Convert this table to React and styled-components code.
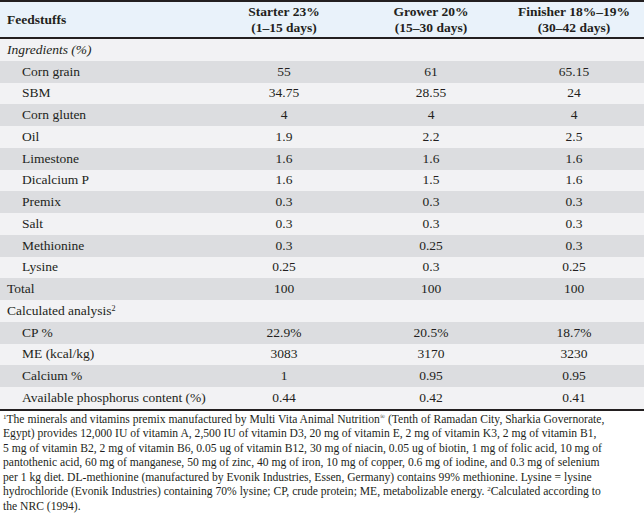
import React from 'react';
import styled, { createGlobalStyle } from 'styled-components';

const GlobalStyle = createGlobalStyle`
  html, body {
    margin: 0;
    padding: 0;
    background: #ffffff;
  }
  body {
    font-family: "Liberation Serif", "Times New Roman", serif;
    color: #231f20;
  }
`;

const cols = '210px 148px 146px 140px';

const Page = styled.div`
  width: 644px;
`;

const Table = styled.div`
  border-top: 2px solid #231f20;
  border-bottom: 2px solid #231f20;
`;

const HeadRow = styled.div`
  display: grid;
  grid-template-columns: ${cols};
  height: 35px;
  background: #e9f2fa;
  border-bottom: 2px solid #231f20;
  font-weight: bold;
  font-size: 13.5px;
  line-height: 15.5px;
`;

const HeadCell = styled.div`
  display: flex;
  flex-direction: column;
  justify-content: center;
  align-items: ${p => (p.$left ? 'flex-start' : 'center')};
  padding-left: ${p => (p.$left ? '7px' : '0')};
  text-align: center;
`;

const Row = styled.div`
  display: grid;
  grid-template-columns: ${cols};
  height: 21.75px;
  align-items: center;
  background: ${p => (p.$shade ? '#dcdde0' : '#f2f2f4')};
  font-size: 13.5px;
`;

const Label = styled.div`
  padding-left: ${p => (p.$indent ? '22px' : '7px')};
  font-style: ${p => (p.$italic ? 'italic' : 'normal')};
  white-space: nowrap;
`;

const Value = styled.div`
  text-align: center;
`;

const Sup = styled.sup`
  font-size: 0.6em;
  line-height: 0;
  vertical-align: 0.55em;
`;

const Note = styled.div`
  padding: 2px 3px 0 3px;
  font-size: 11.6px;
  line-height: 14.5px;
  white-space: nowrap;
`;

const rows = [
  { label: 'Ingredients (%)', italic: true },
  { label: 'Corn grain', indent: true, v: ['55', '61', '65.15'] },
  { label: 'SBM', indent: true, v: ['34.75', '28.55', '24'] },
  { label: 'Corn gluten', indent: true, v: ['4', '4', '4'] },
  { label: 'Oil', indent: true, v: ['1.9', '2.2', '2.5'] },
  { label: 'Limestone', indent: true, v: ['1.6', '1.6', '1.6'] },
  { label: 'Dicalcium P', indent: true, v: ['1.6', '1.5', '1.6'] },
  { label: 'Premix', indent: true, v: ['0.3', '0.3', '0.3'] },
  { label: 'Salt', indent: true, v: ['0.3', '0.3', '0.3'] },
  { label: 'Methionine', indent: true, v: ['0.3', '0.25', '0.3'] },
  { label: 'Lysine', indent: true, v: ['0.25', '0.3', '0.25'] },
  { label: 'Total', v: ['100', '100', '100'] },
  { label: 'Calculated analysis', sup: '2' },
  { label: 'CP %', indent: true, v: ['22.9%', '20.5%', '18.7%'] },
  { label: 'ME (kcal/kg)', indent: true, v: ['3083', '3170', '3230'] },
  { label: 'Calcium %', indent: true, v: ['1', '0.95', '0.95'] },
  { label: 'Available phosphorus content (%)', indent: true, v: ['0.44', '0.42', '0.41'] },
];

export default function App() {
  return (
    <Page>
      <GlobalStyle />
      <Table>
        <HeadRow>
          <HeadCell $left>Feedstuffs</HeadCell>
          <HeadCell>
            <span>Starter 23%</span>
            <span>(1–15 days)</span>
          </HeadCell>
          <HeadCell>
            <span>Grower 20%</span>
            <span>(15–30 days)</span>
          </HeadCell>
          <HeadCell>
            <span>Finisher 18%–19%</span>
            <span>(30–42 days)</span>
          </HeadCell>
        </HeadRow>
        {rows.map((r, i) => (
          <Row key={i} $shade={i % 2 === 1}>
            <Label $indent={r.indent} $italic={r.italic}>
              {r.label}
              {r.sup && <Sup>{r.sup}</Sup>}
            </Label>
            <Value>{r.v ? r.v[0] : ''}</Value>
            <Value>{r.v ? r.v[1] : ''}</Value>
            <Value>{r.v ? r.v[2] : ''}</Value>
          </Row>
        ))}
      </Table>
      <Note>
        <Sup>1</Sup>The minerals and vitamins premix manufactured by Multi Vita Animal Nutrition<Sup>®</Sup> (Tenth of Ramadan City, Sharkia Governorate,
        <br />
        Egypt) provides 12,000 IU of vitamin A, 2,500 IU of vitamin D3, 20 mg of vitamin E, 2 mg of vitamin K3, 2 mg of vitamin B1,
        <br />
        5 mg of vitamin B2, 2 mg of vitamin B6, 0.05 ug of vitamin B12, 30 mg of niacin, 0.05 ug of biotin, 1 mg of folic acid, 10 mg of
        <br />
        pantothenic acid, 60 mg of manganese, 50 mg of zinc, 40 mg of iron, 10 mg of copper, 0.6 mg of iodine, and 0.3 mg of selenium
        <br />
        per 1 kg diet. DL-methionine (manufactured by Evonik Industries, Essen, Germany) contains 99% methionine. Lysine = lysine
        <br />
        hydrochloride (Evonik Industries) containing 70% lysine; CP, crude protein; ME, metabolizable energy.  <Sup>2</Sup>Calculated according to
        <br />
        the NRC (1994).
      </Note>
    </Page>
  );
}
